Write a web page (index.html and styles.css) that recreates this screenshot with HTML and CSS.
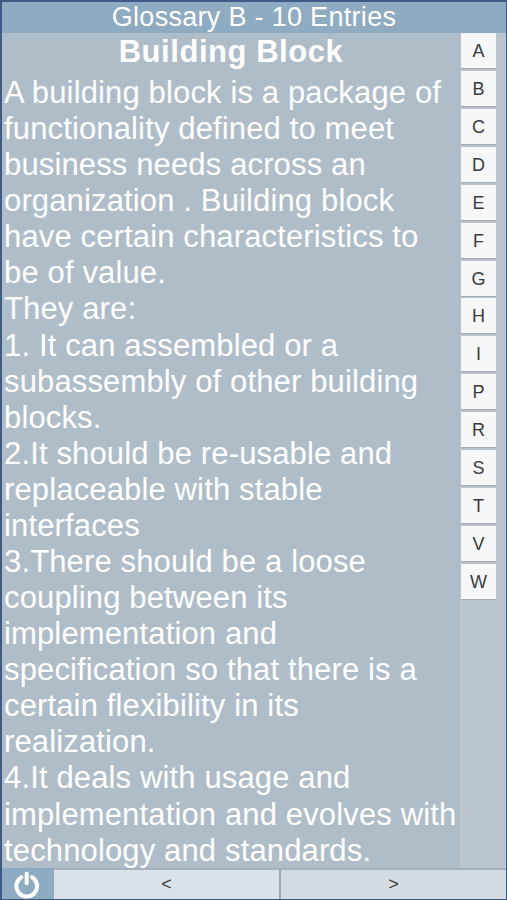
FILE: index.html
```
<!DOCTYPE html>
<html lang="en">

<head>
    <meta charset="UTF-8">
    <meta name="viewport" content="width=device-width,initial-scale=1">
    <link rel="stylesheet" href="styles.css">
    <title>Glossary</title>
</head>

<body>
    <div class="app">
        <header class="title-bar">Glossary B - 10 Entries</header>
        <main class="content">
            <article class="entry">
                <h1 class="entry-title">Building Block</h1>
                <p class="entry-text">A building block is a package of<br>
                    functionality defined to meet<br>
                    business needs across an<br>
                    organization . Building block<br>
                    have certain characteristics to<br>
                    be of value.<br>
                    They are:<br>
                    1. It can assembled or a<br>
                    subassembly of other building<br>
                    blocks.<br>
                    2.It should be re-usable and<br>
                    replaceable with stable<br>
                    interfaces<br>
                    3.There should be a loose<br>
                    coupling between its<br>
                    implementation and<br>
                    specification so that there is a<br>
                    certain flexibility in its<br>
                    realization.<br>
                    4.It deals with usage and<br>
                    implementation and evolves with<br>
                    technology and standards.</p>
            </article>
            <nav class="letters">
                <button class="letter">A</button>
                <button class="letter">B</button>
                <button class="letter">C</button>
                <button class="letter">D</button>
                <button class="letter">E</button>
                <button class="letter">F</button>
                <button class="letter">G</button>
                <button class="letter">H</button>
                <button class="letter">I</button>
                <button class="letter">P</button>
                <button class="letter">R</button>
                <button class="letter">S</button>
                <button class="letter">T</button>
                <button class="letter">V</button>
                <button class="letter">W</button>
            </nav>
        </main>
        <footer class="bottom-bar">
            <button class="power" aria-label="Quit">
                <svg width="28" height="28" viewBox="0 0 28 28" fill="none" stroke="#fff" stroke-width="4" stroke-linecap="round">
                    <path d="M7.3 6.2A10.4 10.4 0 1 0 18.1 6.2" />
                    <path d="M12.7 2.4V12.2" />
                </svg>
            </button>
            <button class="step">&lt;</button>
            <button class="step">&gt;</button>
        </footer>
    </div>
</body>

</html>
```
FILE: styles.css
```
*,
*::before,
*::after {
    box-sizing: border-box;
    padding: 0;
    margin: 0;
}

body {
    height: 100vh;
    overflow: hidden;
    font-family: "Liberation Sans", Arial, sans-serif;
}

button {
    border: none;
    font-family: inherit;
    color: #3a3a3a;
}

.app {
    display: flex;
    flex-direction: column;
    width: 507px;
    height: 900px;
    border: 1px solid #3f5a84;
    border-top-width: 2px;
    border-left-width: 2px;
    background: #afbdc9;
}

.title-bar {
    height: 31px;
    background: #8fabc1;
    color: #fff;
    font-size: 27px;
    line-height: 30px;
    letter-spacing: 0.3px;
    text-align: center;
}

.content {
    display: flex;
    flex: 1;
    min-height: 0;
}

.entry {
    width: 458px;
    padding: 0 2px;
    color: #fff;
    white-space: nowrap;
}

.entry-title {
    height: 42px;
    font-size: 31px;
    line-height: 37px;
    letter-spacing: 0.55px;
    text-align: center;
}

.entry-text {
    font-size: 31px;
    line-height: 36.08px;
    letter-spacing: 0.14px;
}

.letters {
    display: flex;
    flex: 1;
    flex-direction: column;
    gap: 2.93px;
    padding-left: 1px;
    background: #bac5ce;
}

.letter {
    width: 35px;
    height: 35px;
    background: #f6f7f8;
    box-shadow: 0 1px 1px #a3adb5;
    font-size: 18px;
    line-height: 36px;
}

.bottom-bar {
    display: flex;
    height: 31px;
    border-top: 2px solid #a3b1c1;
    background: #8fabc1;
}

.power {
    width: 52px;
    margin-top: -2px;
    padding-top: 2px;
    background: #8fabc1;
}

.power svg {
    display: block;
    margin: 0 auto;
}

.step {
    flex: 1;
    background: #d9e2e8;
    font-size: 18px;
    line-height: 29px;
}

.step + .step {
    border-left: 2px solid #9daab5;
    background: #d3dce3;
}
```
